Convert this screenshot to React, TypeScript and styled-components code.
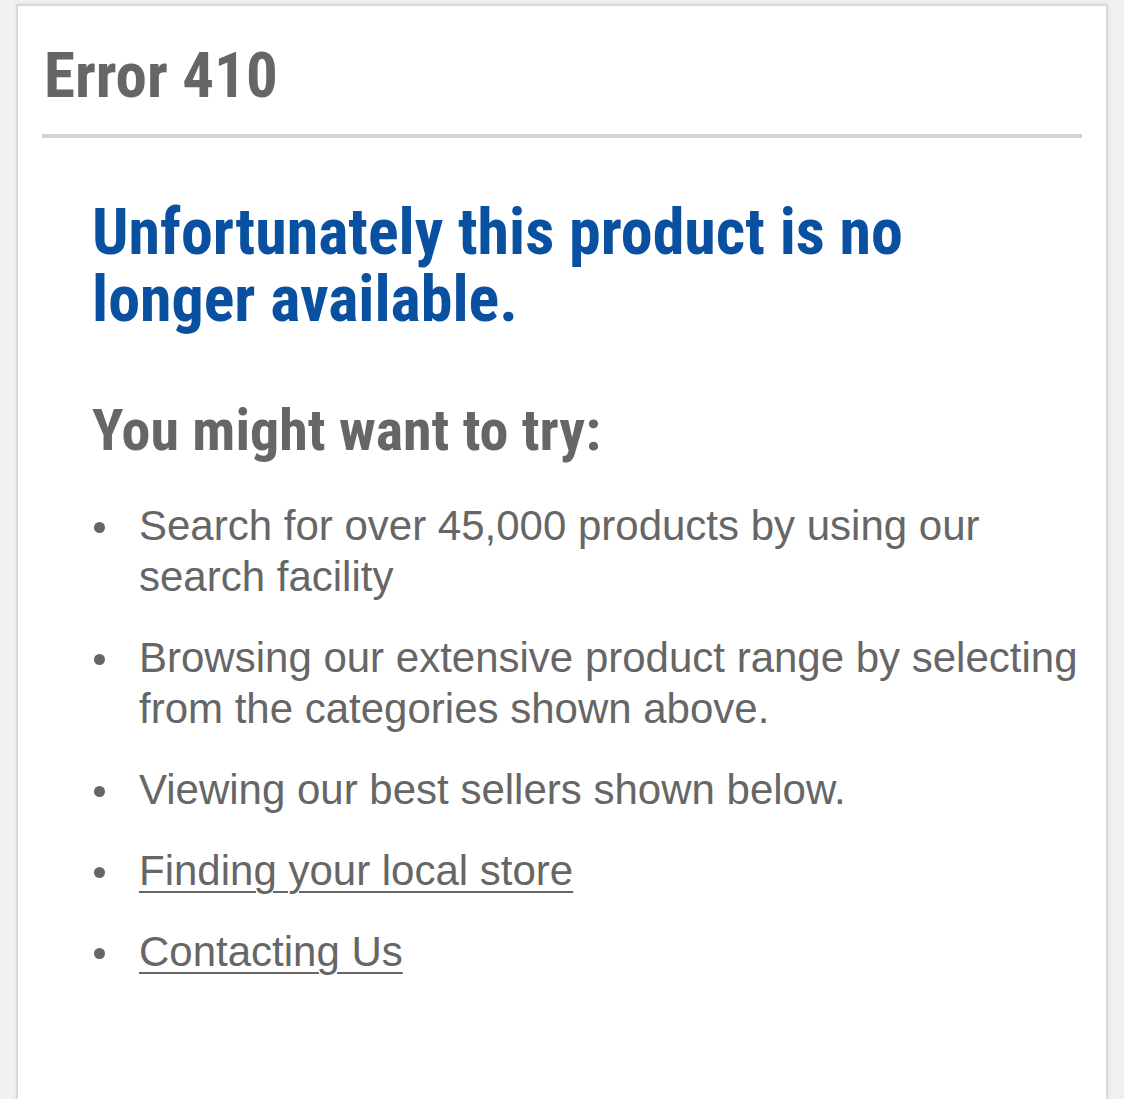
import styled, { createGlobalStyle } from "styled-components";

const GlobalStyle = createGlobalStyle`
  html, body {
    margin: 0;
    padding: 0;
    background: #f1f1f1;
  }
  body {
    font-family: "Liberation Sans", Arial, sans-serif;
  }
`;

const tips = [
  { text: "Search for over 45,000 products by using our search facility" },
  {
    text: "Browsing our extensive product range by selecting from the categories shown above.",
  },
  { text: "Viewing our best sellers shown below." },
  { text: "Finding your local store", link: true },
  { text: "Contacting Us", link: true },
];

export default function App() {
  return (
    <>
      <GlobalStyle />
      <Card>
        <Header>
          <ErrorTitle>Error 410</ErrorTitle>
        </Header>
        <Content>
          <Headline>Unfortunately this product is no longer available.</Headline>
          <SubTitle>You might want to try:</SubTitle>
          <TipList>
            {tips.map((tip) => (
              <Tip key={tip.text}>
                <span>
                  {tip.link ? <TipLink href="#">{tip.text}</TipLink> : tip.text}
                </span>
              </Tip>
            ))}
          </TipList>
        </Content>
      </Card>
    </>
  );
}

const Card = styled.div`
  margin: 4px 16px 0;
  min-height: 1120px;
  background: #fff;
  border: 2px solid #d9d9d9;
  border-bottom: none;
  box-shadow: 0 0 4px rgba(0, 0, 0, 0.08);
  padding: 0 24px;
`;
const Header = styled.div`
  border-bottom: 4px solid #d4d4d4;
  padding: 34px 0 22px;
`;
const ErrorTitle = styled.h1`
  margin: 0 0 0 2px;
  font-family: Roboto, "Open Sans", sans-serif;
  font-stretch: condensed;
  font-weight: bold;
  font-size: 63px;
  line-height: 72px;
  color: #666;
`;
const Content = styled.div`
  padding: 61px 0 0 50px;
`;
const Headline = styled.h2`
  margin: 0;
  font-family: Roboto, "Open Sans", sans-serif;
  font-stretch: condensed;
  font-weight: bold;
  font-size: 64px;
  line-height: 67px;
  color: #0a50a0;
  max-width: 900px;
`;
const SubTitle = styled.h3`
  margin: 64px 0 0;
  font-family: Roboto, "Open Sans", sans-serif;
  font-stretch: condensed;
  font-weight: bold;
  font-size: 58px;
  line-height: 66px;
  color: #666;
`;
const TipList = styled.ul`
  margin: 37px 0 0;
  padding: 0;
  list-style: none;
`;
const Tip = styled.li`
  display: grid;
  grid-template-columns: 47px 1fr;
  font-size: 42px;
  line-height: 51px;
  color: #666;
  margin-bottom: 30px;
  &::before {
    content: "";
    width: 11px;
    height: 11px;
    margin: 22px 0 0 2px;
    border-radius: 50%;
    background: #666;
  }
`;
const TipLink = styled.a`
  color: #666;
  text-decoration: underline;
  text-underline-offset: 6px;
  text-decoration-thickness: 2px;
`;
